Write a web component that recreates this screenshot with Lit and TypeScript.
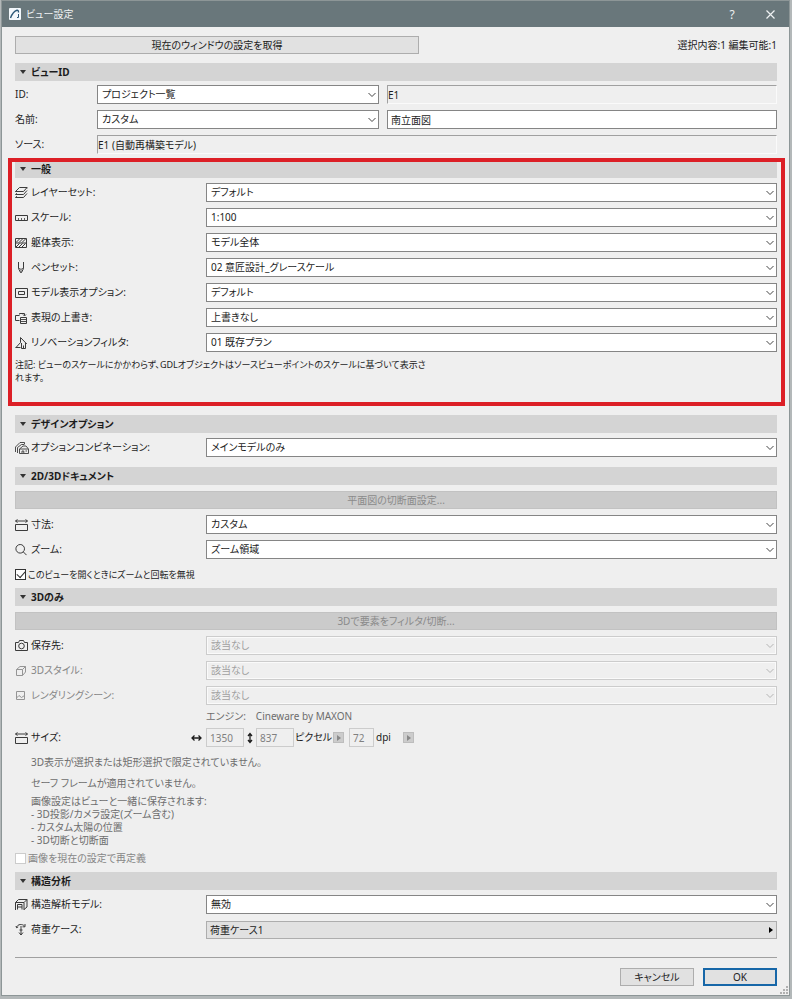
import { LitElement, html, css, svg, type SVGTemplateResult } from "lit";
import { customElement, property } from "lit/decorators.js";

const icons: Record<string, SVGTemplateResult> = {
  layers: svg`<path d="M.5 5.5 4.5 1.5H12L8.5 5.5ZM.5 5.5 .5 6M1.8 7.2.5 8.5H8.5L12 4.5M1.8 10.2.5 11.5H8.5L12 7.5M12 1.5V2.5"/>`,
  scale: svg`<path d="M.5 4.5H12.5V9.5H.5Z"/><path d="M3.5 9V7M6.5 9V7M9.5 9V7" stroke-width=".8"/>`,
  structure: svg`<path d="M.5 2.5H11.5V11.5H.5Z"/><path d="M1 7H11M1 6.5 4.5 3M4 6.5 7.5 3M7 6.5 10.5 3M1 11 4.5 7.5M4 11 7.5 7.5M7 11 10.5 7.5"/>`,
  pen: svg`<path d="M3.5 1V7.5L5.5 11.5H6.5L8.5 7.5V1" /><path d="M6 7.5V11.5M3.5 7.5H5L6 8.5 7 7.5H8.5" stroke-width=".7"/>`,
  model: svg`<path d="M.5 2.5H12.5V11.5H.5ZM3.5 5.5H9.5V8.5H3.5Z"/>`,
  override: svg`<path d="M4.5 9.5H.5V4.5H4.5M4.5 3.5V2.5H9.5V4.5M8 3.5 9.5 5 11 3.5M5.5 6.5H11.5V12.5H5.5Z"/><path d="M6 8.5H11M6 10.5H11" stroke-width=".9"/>`,
  renovation: svg`<path d="M.5 11.5H5.5M1 11.5 5.5 6.5V1.5L11.8 8M6.5 7V12.5H10.5V7M8.5 12V9.5"/>`,
  option: svg`<path d="M.5 11V6L5 1.5H9.5V3M2.5 12V6.5L6.5 3.5H9.5M4.5 12.5V8L8 5H11L13.5 8V12.5ZM7 12V10H8.8V12M10.5 10H12M4.5 8H13" stroke-width=".9"/>`,
  dimension: svg`<path d="M.5 6.5H12.5V12.5H.5Z"/><path d="M.5 3H12.5M2.5 1.5.5 3 2.5 4.5M10.5 1.5 12.5 3 10.5 4.5"/>`,
  zoom: svg`<circle cx="5.2" cy="5.8" r="4.3"/><path d="M8.3 8.9 11.5 12.1"/>`,
  camera: svg`<path d="M.5 11.5V3.5H3.5L4.5 1.5H8.5L9.5 3.5H12.5V11.5Z"/><circle cx="6.5" cy="7" r="2.8"/>`,
  cube: svg`<path d="M1.5 5.5H7.5V11.5H1.5ZM1.5 5.5 5 2.5H10.5L7.5 5.5M10.5 2.5V8L7.5 11.5"/>`,
  scene: svg`<path d="M1.5 2.5H9.5V10.5H1.5ZM1.5 9 4 6.5 6.5 8.5 9.5 6.5"/>`,
  analysis: svg`<path d="M.5 12V4.5L3.5 1.5H12V9L9 11.5M.5 4.5H9L12 1.5M9 4.5V12M2.5 11.5V6.5H7V11.5M2.5 9H7"/>`,
  load: svg`<path d="M1.5 4.5C2.5.8 7.5.8 9.5 3M7.5 3.8H10V1M1 3 1.5 4.7 3.2 4M6 3V12M4 9.5 6 12 8 9.5M4.5 7H7.5"/>`,
};

const icon = (name: string) =>
  html`<svg class="icon" viewBox="0 0 14 14" width="14" height="14" aria-hidden="true">${icons[name]}</svg>`;

const controls = css`
  * {
    box-sizing: border-box;
  }
  select,
  input,
  button {
    font: inherit;
    color: inherit;
    margin: 0;
    border-radius: 0;
    font-feature-settings: inherit;
  }
  .icon {
    fill: none;
    stroke: currentColor;
    flex: none;
  }
`;

@customElement("combo-box")
class ComboBox extends LitElement {
  static styles = [
    controls,
    css`
      :host {
        display: grid;
        min-width: 0;
      }
      select {
        grid-area: 1 / 1;
        width: 100%;
        height: 19px;
        padding: 0 20px 0 4px;
        border: 1px solid #858585;
        background: #fff;
        appearance: none;
      }
      svg {
        grid-area: 1 / 1;
        place-self: center end;
        margin-right: 3px;
        fill: none;
        stroke: #444;
        pointer-events: none;
      }
      select:disabled {
        color: #a0a0a0;
        opacity: 1;
        background: #efefef;
        border-color: #ccc;
        box-shadow: inset 0 0 0 1px #fafafa;
      }
      select:disabled + svg {
        stroke: #b4b4b4;
      }
    `,
  ];
  @property() value = "";
  @property() label = "";
  @property({ type: Boolean }) off = false;

  render() {
    return html`<select aria-label=${this.label} ?disabled=${this.off}>
        <option>${this.value}</option>
      </select>
      <svg width="8" height="6" viewBox="0 0 8 6"><path d="M.5 1 4 4.5 7.5 1" /></svg>`;
  }
}

@customElement("app-root")
class AppRoot extends LitElement {
  static styles = [
    controls,
    css`
      :host {
        display: block;
        min-height: 100vh;
        padding: 1px 3px 4px 2px;
        background: #b3b8b9;
        color: #1c1c1c;
        font: 10px/13px "Noto Sans", "Noto Sans CJK JP", sans-serif;
        font-feature-settings: "palt";
      }
      .dialog {
        position: relative;
        background: #efefef;
        box-shadow: 0 0 0 1px #8d9697;
      }
      .titlebar {
        display: flex;
        align-items: center;
        height: 26px;
        padding: 0 7px;
        background: #69777b;
        color: #eef1f2;
      }
      .titlebar h1 {
        flex: 1;
        margin: 0 0 0 5px;
        font-size: 10px;
        font-weight: 400;
      }
      .titlebar button {
        display: grid;
        place-items: center;
        width: 24px;
        height: 20px;
        margin-left: 14px;
        padding: 0;
        border: 0;
        background: none;
        font-size: 12px;
      }
      .body {
        padding: 9px 12px 9px 13px;
      }
      .top,
      .footer {
        display: flex;
        align-items: center;
        justify-content: space-between;
      }
      .push {
        display: block;
        height: 18px;
        padding: 0;
        border: 1px solid #adadad;
        background: #e1e1e1;
        line-height: 14px;
      }
      .capture {
        width: 53%;
      }
      .wide {
        width: 100%;
        margin: 6px 0;
      }
      .push:disabled {
        background: #cbcbcb;
        border-color: #c2c2c2;
        color: #8a8a8a;
      }
      .bar {
        display: flex;
        align-items: center;
        height: 18px;
        margin: 0;
        padding-left: 5px;
        background: #d4d4d4;
        font-size: 10px;
        font-weight: 700;
      }
      .bar button {
        display: flex;
        align-items: center;
        gap: 5px;
        padding: 0;
        border: 0;
        background: none;
      }
      .bar svg {
        fill: #333;
      }
      .view {
        margin-top: 9px;
      }
      .rows {
        display: grid;
        gap: 6px;
        padding-top: 5px;
      }
      .view .rows {
        padding: 4px 0 6px;
      }
      .wide + .rows {
        padding-top: 0;
      }
      .row {
        display: grid;
        grid-template-columns: 191px minmax(0, 1fr);
        align-items: center;
        height: 19px;
      }
      .id-row {
        display: grid;
        grid-template-columns: 82px minmax(0, 282fr) minmax(0, 398fr);
        align-items: center;
        height: 19px;
      }
      .id-row .last {
        margin-left: 8px;
      }
      .id-row .span {
        grid-column: 2 / 4;
      }
      .name {
        display: flex;
        align-items: center;
        gap: 2px;
        white-space: nowrap;
      }
      .name .icon {
        opacity: 0.85;
      }
      .dim {
        color: #868686;
      }
      .text {
        height: 19px;
        min-width: 0;
        padding: 0 3px;
        border: 1px solid #858585;
        background: #fff;
      }
      .text:read-only {
        padding: 0;
        background: #efefef;
        border-color: #a0a0a0 #fafafa #fafafa #a0a0a0;
      }
      .general {
        position: relative;
        padding-bottom: 20px;
        margin-bottom: 11px;
      }
      .general::after {
        content: "";
        position: absolute;
        inset: -2px -8px -2px -7px;
        border: 4px solid #dc1f26;
        pointer-events: none;
      }
      .note {
        margin: 6px 0 0;
        font-size: 9px;
      }
      .design {
        margin-bottom: 10px;
      }
      .check {
        display: flex;
        align-items: center;
        gap: 2px;
        height: 19px;
      }
      .check input {
        display: grid;
        place-items: center;
        appearance: none;
        width: 11px;
        height: 11px;
        border: 1px solid #333;
        background: #fff;
      }
      .check input:checked::before {
        content: "";
        width: 7px;
        height: 4px;
        margin-top: -2px;
        border: solid #333;
        border-width: 0 0 1px 1px;
        transform: rotate(-48deg);
      }
      .check input:disabled {
        border-color: #ccc;
      }
      .ignore {
        margin: 6px 0 4px;
        font-size: 9px;
      }
      .redefine {
        margin: 2px 0 4px;
      }
      .engine {
        display: flex;
        gap: 10px;
        margin: 5px 0 5px 191px;
        color: #6d6d6d;
      }
      .size {
        display: flex;
        align-items: center;
        height: 19px;
        white-space: nowrap;
      }
      .size .name {
        flex: 0 0 176px;
      }
      .size .text {
        width: 38px;
        padding: 0 3px;
        color: #808080;
        border-color: #ccc;
      }
      .size .dpi {
        width: 25px;
      }
      .size .arrow {
        width: 15px;
      }
      .size .updown {
        width: 12px;
      }
      .size .unit {
        width: 39px;
        padding-left: 1px;
      }
      .size .unit.short {
        width: 29px;
        padding-left: 2px;
      }
      .step {
        display: grid;
        place-items: center;
        width: 11px;
        height: 11px;
        padding: 0;
        border: 1px solid #bdbdbd;
        background: #ccc;
        margin-right: 5px;
      }
      .step svg {
        fill: #888;
      }
      .info {
        margin: 9px 0 0 16px;
        color: #6d6d6d;
      }
      .info p {
        margin: 0 0 8px;
      }
      .info p + p {
        margin-bottom: 5px;
      }
      .info ul {
        margin: 0;
        padding: 0;
        list-style: none;
      }
      .case {
        display: flex;
        align-items: center;
        justify-content: space-between;
        padding: 0 3px;
        text-align: left;
      }
      .footer {
        justify-content: flex-end;
        gap: 9px;
        margin-top: 18px;
        padding-top: 10px;
        border-top: 1px solid #a0a0a0;
      }
      .footer .push {
        width: 74px;
      }
      .footer .ok {
        border: 2px solid #1767a8;
      }
      .grip {
        position: absolute;
        right: 1px;
        bottom: 1px;
        fill: #b0b0b0;
      }
    `,
  ];

  private bar(title: string) {
    return html`<h2 class="bar">
      <button aria-expanded="true">
        <svg width="6" height="4" viewBox="0 0 6 4"><path d="M0 0H6L3 4Z" /></svg>${title}
      </button>
    </h2>`;
  }

  private row(name: string, label: string, value: string, off = false, dim = off) {
    return html`<div class="row">
      <span class="name ${dim ? "dim" : ""}">${icon(name)}${label}</span>
      <combo-box label=${label} value=${value} ?off=${off}></combo-box>
    </div>`;
  }

  private step(label: string) {
    return html`<button class="step" disabled aria-label=${label}>
      <svg width="4" height="6" viewBox="0 0 4 6"><path d="M0 0 4 3 0 6Z" /></svg>
    </button>`;
  }

  render() {
    return html`<div class="dialog" role="dialog" aria-labelledby="title">
      <header class="titlebar">
        <svg width="12" height="12" viewBox="0 0 12 12" aria-hidden="true">
          <rect width="12" height="12" rx="1" fill="#f3f8fc" />
          <path d="M1.5 10C3 6 5 3 8 2.2 9 2 9.5 3 9.5 4.5" fill="none" stroke="#2b5878" stroke-width="1.4" />
          <path d="M9.5 6V9.5H8" fill="none" stroke="#2b5878" />
        </svg>
        <h1 id="title">ビュー設定</h1>
        <button aria-label="ヘルプ">?</button>
        <button aria-label="閉じる">
          <svg width="9" height="9" viewBox="0 0 9 9" fill="none" stroke="currentColor" stroke-width="1.2"><path d="M.5 .5 8.5 8.5M8.5 .5 .5 8.5" /></svg>
        </button>
      </header>
      <div class="body">
        <div class="top">
          <button class="push capture">現在のウィンドウの設定を取得</button>
          <span>選択内容:1 編集可能:1</span>
        </div>

        <section class="view">
          ${this.bar("ビューID")}
          <div class="rows">
            <div class="id-row">
              <label for="id">ID:</label>
              <combo-box label="ID" value="プロジェクト一覧"></combo-box>
              <input class="text last" id="id" readonly value="E1" />
            </div>
            <div class="id-row">
              <label for="name">名前:</label>
              <combo-box label="名前" value="カスタム"></combo-box>
              <input class="text last" id="name" value="南立面図" />
            </div>
            <div class="id-row">
              <label for="source">ソース:</label>
              <input class="text span" id="source" readonly value="E1 (自動再構築モデル)" />
            </div>
          </div>
        </section>

        <section class="general">
          ${this.bar("一般")}
          <div class="rows">
            ${this.row("layers", "レイヤーセット:", "デフォルト")}
            ${this.row("scale", "スケール:", "1:100")}
            ${this.row("structure", "躯体表示:", "モデル全体")}
            ${this.row("pen", "ペンセット:", "02 意匠設計_グレースケール")}
            ${this.row("model", "モデル表示オプション:", "デフォルト")}
            ${this.row("override", "表現の上書き:", "上書きなし")}
            ${this.row("renovation", "リノベーションフィルタ:", "01 既存プラン")}
          </div>
          <p class="note">
            注記: ビューのスケールにかかわらず、GDLオブジェクトはソースビューポイントのスケールに基づいて表示さ<br />れます。
          </p>
        </section>

        <section class="design">
          ${this.bar("デザインオプション")}
          <div class="rows">${this.row("option", "オプションコンビネーション:", "メインモデルのみ")}</div>
        </section>

        <section>
          ${this.bar("2D/3Dドキュメント")}
          <button class="push wide" disabled>平面図の切断面設定...</button>
          <div class="rows">
            ${this.row("dimension", "寸法:", "カスタム")} ${this.row("zoom", "ズーム:", "ズーム領域")}
          </div>
          <label class="check ignore"><input type="checkbox" checked />このビューを開くときにズームと回転を無視</label>
        </section>

        <section>
          ${this.bar("3Dのみ")}
          <button class="push wide" disabled>3Dで要素をフィルタ/切断...</button>
          <div class="rows">
            ${this.row("camera", "保存先:", "該当なし", true, false)}
            ${this.row("cube", "3Dスタイル:", "該当なし", true)}
            ${this.row("scene", "レンダリングシーン:", "該当なし", true)}
          </div>
          <div class="engine"><span>エンジン:</span><span>Cineware by MAXON</span></div>
          <div class="size">
            <span class="name">${icon("dimension")}サイズ:</span>
            <svg class="icon arrow" width="15" height="8" viewBox="0 0 15 8"><path d="M1 4H10M3.5 1.5 1 4 3.5 6.5M7.5 1.5 10 4 7.5 6.5" stroke-width="1.3" /></svg>
            <input class="text" aria-label="幅" disabled value="1350" />
            <svg class="icon updown" width="12" height="12" viewBox="0 0 12 12"><path d="M6 2V10M4 4 6 1.5 8 4M4 8 6 10.5 8 8" stroke-width="1.3" /></svg>
            <input class="text" aria-label="高さ" disabled value="837" />
            <span class="unit">ピクセル</span>${this.step("単位")}
            <input class="text dpi" aria-label="解像度" disabled value="72" />
            <span class="unit short">dpi</span>${this.step("解像度の単位")}
          </div>
          <div class="info">
            <p>3D表示が選択または矩形選択で限定されていません。</p>
            <p>セーフ フレームが適用されていません。</p>
            画像設定はビューと一緒に保存されます:
            <ul>
              <li>- 3D投影/カメラ設定(ズーム含む)</li>
              <li>- カスタム太陽の位置</li>
              <li>- 3D切断と切断面</li>
            </ul>
          </div>
          <label class="check redefine dim"><input type="checkbox" disabled />画像を現在の設定で再定義</label>
        </section>

        <section>
          ${this.bar("構造分析")}
          <div class="rows">
            ${this.row("analysis", "構造解析モデル:", "無効")}
            <div class="row">
              <span class="name">${icon("load")}荷重ケース:</span>
              <button class="push case">
                荷重ケース1<svg width="4" height="6" viewBox="0 0 4 6"><path d="M0 0 4 3 0 6Z" /></svg>
              </button>
            </div>
          </div>
        </section>

        <footer class="footer">
          <button class="push">キャンセル</button>
          <button class="push ok">OK</button>
        </footer>
      </div>
      <svg class="grip" width="8" height="8" viewBox="0 0 8 8" aria-hidden="true">
        <path d="M6 0H8V2H6ZM3 3H5V5H3ZM6 3H8V5H6ZM0 6H2V8H0ZM3 6H5V8H3ZM6 6H8V8H6Z" />
      </svg>
    </div>`;
  }
}
